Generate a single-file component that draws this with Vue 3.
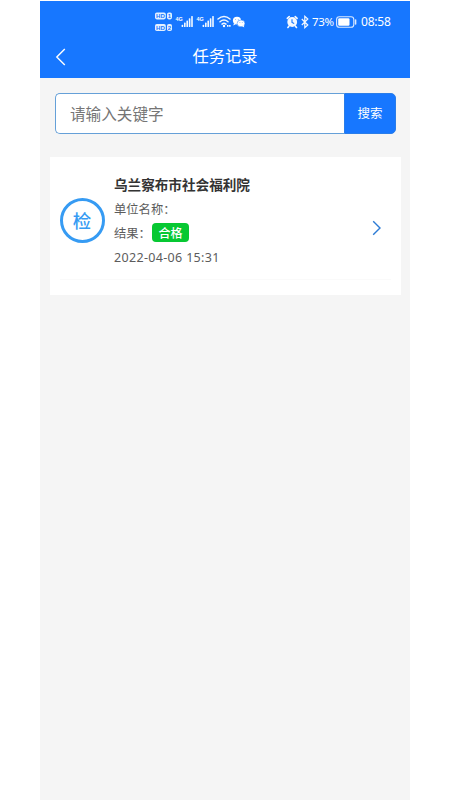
<script setup>
import { ref } from 'vue'

const keyword = ref('')
const records = [
  { mark: '检', title: '乌兰察布市社会福利院', result: '合格', time: '2022-04-06 15:31' },
]
const bars = [0, 1, 2, 3, 4]
</script>

<template>
  <main class="phone">
    <header class="header">
      <div class="status">
        <svg class="signals" width="92" height="22" viewBox="0 0 92 22">
          <g v-for="n in 2" :key="n" :transform="`translate(0 ${(n - 1) * 11.6})`">
            <rect x="0" y="1.4" width="10.8" height="7" rx="1.8" fill="#e4f0ff" />
            <text x="5.4" y="7.2" class="hd" text-anchor="middle">HD</text>
            <rect x="12" y="1.4" width="5" height="7" rx="1.8" fill="#e4f0ff" />
            <text x="14.5" y="7.2" class="hd" text-anchor="middle">{{ n }}</text>
          </g>
          <g v-for="(x, i) in [20.5, 41.5]" :key="'s' + i" :transform="`translate(${x} 0)`">
            <text x="0" y="9.8" class="net">4G</text>
            <rect
              v-for="b in bars" :key="b"
              :x="6.1 + b * 2.4" :y="13.8 - b * 2.2" width="1.6" :height="2.2 + b * 2.2" rx=".6"
              fill="#f4f9ff"
            />
          </g>
          <g fill="none" stroke="#f1f7ff" stroke-width="1.5" stroke-linecap="round">
            <path d="M63 8Q69 3 75 8" />
            <path d="M65 10.7Q69 7.3 73 10.7" />
            <path d="M67 13.1Q69 11.5 71 13.1" />
          </g>
          <circle cx="69" cy="15" r="1.2" fill="#fff" />
          <path d="M72 14.8h3.6" fill="none" stroke="#fff" stroke-width="1.8" stroke-dasharray="1.5 .6" />
          <ellipse cx="82" cy="9.6" rx="4.1" ry="3.8" fill="#fff" />
          <path d="M79 12l-.7 2.5 2.8-1.4z" fill="#fff" />
          <ellipse cx="86" cy="12.4" rx="3.9" ry="3.4" fill="#fff" stroke="#1777ff" stroke-width=".5" />
          <path d="M87.2 15l2 1.6-.4-2.7z" fill="#fff" />
          <g fill="#1777ff">
            <circle cx="80.6" cy="8.6" r=".45" /><circle cx="83.2" cy="8.6" r=".45" />
            <circle cx="84.9" cy="11.7" r=".4" /><circle cx="87.2" cy="11.7" r=".4" />
          </g>
        </svg>
        <div class="device">
          <svg width="25" height="14" viewBox="0 0 25 14">
            <circle cx="6.2" cy="7" r="4.9" fill="#f4f8ff" />
            <path d="M1.3 3.4L3.2 1.6M11.1 3.4L9.2 1.6M2.9 11.2l-1 1.3M9.5 11.2l1 1.3" stroke="#f4f8ff" stroke-width="1.6" stroke-linecap="round" />
            <path d="M6 4.2v3.2l2.2 1.1" fill="none" stroke="#1777ff" stroke-width="1.1" />
            <path d="M15.8 4l6 6-3 2.7V1.3l3 2.7-6 6" fill="none" stroke="#f4f8ff" stroke-width="1.2" />
          </svg>
          <span class="percent">73%</span>
          <svg class="battery" width="21" height="12" viewBox="0 0 21 12">
            <rect x=".6" y=".7" width="17.2" height="10.6" rx="2.8" fill="none" stroke="#dceaff" stroke-width="1.1" />
            <rect x="2.2" y="2.2" width="11.3" height="7.6" rx="1.2" fill="#fff" />
            <path d="M19.6 4v4" stroke="#dceaff" stroke-width="1.5" stroke-linecap="round" />
          </svg>
          <span class="clock">08:58</span>
        </div>
      </div>
      <nav class="nav">
        <svg class="back" width="12" height="18" viewBox="0 0 12 18">
          <path d="M9.8 1L1.8 9l8 8" fill="none" stroke="#fff" stroke-width="1.4" />
        </svg>
        <h1>任务记录</h1>
      </nav>
    </header>

    <form class="search" @submit.prevent>
      <input v-model="keyword" placeholder="请输入关键字" />
      <button type="submit">搜索</button>
    </form>

    <section class="list">
      <article v-for="item in records" :key="item.title" class="card">
        <div class="row">
          <div class="mark">{{ item.mark }}</div>
          <div class="info">
            <h2>{{ item.title }}</h2>
            <p class="unit">单位名称：</p>
            <p class="result">结果：<span class="tag">{{ item.result }}</span></p>
            <p class="time">{{ item.time }}</p>
          </div>
          <svg class="arrow" width="10" height="16" viewBox="0 0 10 16">
            <path d="M1.2 1.3l6.8 6.7-6.8 6.7" fill="none" stroke="#2c7bd5" stroke-width="1.4" />
          </svg>
        </div>
      </article>
    </section>
  </main>
</template>

<style>
body {
  background: #fff;
}
</style>

<style scoped>
* {
  box-sizing: border-box;
}
.phone {
  width: 370px;
  height: 799px;
  margin: 1px 40px 0;
  background: #f5f5f5;
  overflow: hidden;
  font-family: "Noto Sans", "Noto Sans CJK SC", sans-serif;
}
.header {
  height: 77px;
  background: #1777ff;
  color: #fff;
}
.status {
  height: 36px;
  padding: 10px 19px 0 115px;
  display: flex;
  justify-content: space-between;
}
.hd {
  font: bold 6px "Liberation Sans", sans-serif;
  fill: #1777ff;
}
.net {
  font: bold 5.4px "Liberation Sans", sans-serif;
  fill: #fff;
}
.device {
  width: 105px;
  height: 22px;
  display: flex;
  align-items: center;
  font: 12px/22px "Noto Sans", sans-serif;
}
.device svg {
  flex: none;
}
.percent {
  width: 25px;
  padding-left: 1px;
  white-space: nowrap;
  font-size: 11.5px;
  line-height: 24px;
  letter-spacing: -0.3px;
}
.clock {
  margin-left: 4px;
  font-size: 12px;
  line-height: 24px;
  letter-spacing: -0.2px;
}
.nav {
  height: 41px;
  padding-left: 15px;
  display: flex;
  align-items: center;
}
.back {
  margin-bottom: 2px;
}
.nav h1 {
  flex: 1;
  margin: 0 27px 4px 0;
  text-align: center;
  font: 400 16.3px/37px "Noto Sans CJK SC", sans-serif;
}
.search {
  height: 41px;
  margin: 14.5px 14px 0 14.5px;
  display: flex;
}
.search input {
  flex: 1;
  min-width: 0;
  padding: 0 15px 0 14.5px;
  border: 1px solid #65a0d8;
  border-right: 0;
  border-radius: 5px 0 0 5px;
  background: #fff;
  outline: none;
  font: 15.6px "Noto Sans CJK SC", sans-serif;
}
.search input::placeholder {
  color: #757575;
  opacity: 1;
}
.search button {
  width: 52px;
  padding: 0 0 2px;
  border: 1px solid #2a7de9;
  border-radius: 0 5px 5px 0;
  background: #1777ff;
  color: #fff;
  font: 12.5px "Noto Sans CJK SC", sans-serif;
}
.list {
  padding: 23.5px 9px 0 10px;
}
.card {
  height: 138px;
  padding: 0 10px 0 9.5px;
  background: #fff;
}
.row {
  height: 123px;
  padding-top: 15px;
  display: flex;
  border-bottom: 1px solid #fafafa;
}
.mark {
  width: 45px;
  height: 45px;
  margin-top: 26px;
  border: 3px solid #369bf3;
  border-radius: 50%;
  color: #369bf3;
  text-align: center;
  font: 500 18.5px/39px "Noto Sans CJK SC", sans-serif;
}
.info {
  flex: 1;
  margin-left: 9.5px;
  color: #5c5c5c;
  font: 12.3px/24px "Noto Sans CJK SC", sans-serif;
}
.info h2 {
  margin: 0;
  color: #333;
  font: 700 13.6px/24px "Noto Sans CJK SC", sans-serif;
}
.info p {
  margin: 0;
}
.info .unit {
  height: 24px;
  line-height: 26px;
}
.info .result {
  height: 25px;
  display: flex;
  align-items: center;
}
.tag {
  width: 37px;
  height: 19px;
  margin: 0 0 1px 1px;
  border-radius: 4px;
  background: #07c832;
  color: #fff;
  text-align: center;
  font-size: 12px;
  font-weight: 500;
  line-height: 19px;
}
.info .time {
  font-family: "Noto Sans", sans-serif;
  font-size: 12.5px;
  line-height: 26px;
  letter-spacing: 0.33px;
}
.arrow {
  margin: 48px 9px 0 0;
}
</style>
